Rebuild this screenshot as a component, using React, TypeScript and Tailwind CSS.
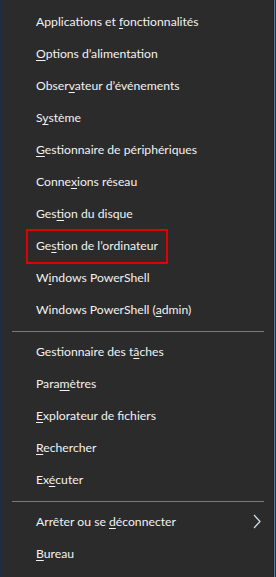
import React from "react";

type Item = {
  before: string;
  key: string;
  after: string;
  submenu?: boolean;
  highlighted?: boolean;
};

const groups: Item[][] = [
  [
    { before: "Applications et ", key: "f", after: "onctionnalités" },
    { before: "", key: "O", after: "ptions d’alimentation" },
    { before: "Obser", key: "v", after: "ateur d’événements" },
    { before: "S", key: "y", after: "stème" },
    { before: "", key: "G", after: "estionnaire de périphériques" },
    { before: "Conne", key: "x", after: "ions réseau" },
    { before: "Ges", key: "t", after: "ion du disque" },
    { before: "Ge", key: "s", after: "tion de l’ordinateur", highlighted: true },
    { before: "W", key: "i", after: "ndows PowerShell" },
    { before: "Windows PowerShell (", key: "a", after: "dmin)" },
  ],
  [
    { before: "Gestionnaire des t", key: "â", after: "ches" },
    { before: "Para", key: "m", after: "ètres" },
    { before: "", key: "E", after: "xplorateur de fichiers" },
    { before: "", key: "R", after: "echercher" },
    { before: "Ex", key: "é", after: "cuter" },
  ],
  [
    { before: "Arrêter ou se ", key: "d", after: "éconnecter", submenu: true },
    { before: "", key: "B", after: "ureau" },
  ],
];

function MenuItem({ item }: { item: Item }) {
  return (
    <div className="relative flex h-8 items-center pl-[35px] pr-3 pt-px">
      <span className="whitespace-nowrap">
        {item.before}
        <span className="underline underline-offset-[2px] decoration-1">{item.key}</span>
        {item.after}
      </span>
      {item.submenu && (
        <svg
          className="absolute right-[12px] top-[8px]"
          width="8"
          height="15"
          viewBox="0 0 8 15"
          fill="none"
        >
          <polyline points="1,1 7,7.5 1,14" stroke="#cfe3f5" strokeWidth="1.2" />
        </svg>
      )}
      {item.highlighted && (
        <div className="pointer-events-none absolute left-[25px] top-[-1px] h-[35px] w-[142px] border-2 border-[#e00000]" />
      )}
    </div>
  );
}

export default function App() {
  return (
    <div
      className="flex h-[577px] w-[276px] bg-[#2b2b2b] text-[12.2px] text-[#f2f2f2]"
      style={{ fontFamily: 'Lato, Roboto, sans-serif' }}
    >
      <div className="w-px bg-[#1e2c47]" />
      <div className="flex flex-1 flex-col pt-[6px]">
        {groups.map((group, gi) => (
          <div key={gi}>
            {gi > 0 && (
              <div className="flex h-[10px] items-start pt-[5px]">
                <div className="ml-[11px] mr-[9px] h-px flex-1 bg-[#7a7a7a]" />
              </div>
            )}
            {group.map((item, i) => (
              <MenuItem key={i} item={item} />
            ))}
          </div>
        ))}
      </div>
      <div className="w-px bg-[#1f1f1f]" />
      <div className="w-px bg-[#5f7fa3]" />
      <div className="w-px bg-[#2b2b2b]" />
    </div>
  );
}
